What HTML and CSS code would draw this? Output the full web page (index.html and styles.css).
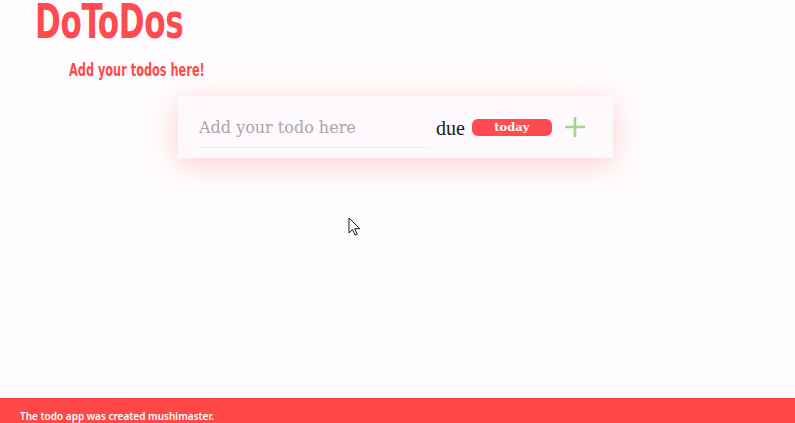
FILE: index.html
```html
<!DOCTYPE html>
<html>
<head>
<meta charset="utf-8">
<link rel="stylesheet" href="styles.css">
</head>
<body>
<div class="page">
  <header class="head">
    <h1 class="title">DoToDos</h1>
    <h2 class="subtitle">Add your todos here!</h2>
  </header>
  <main class="main">
    <form class="card">
      <input class="todo-input" type="text" placeholder="Add your todo here">
      <span class="due">due</span>
      <span class="pill">today</span>
      <svg class="plus" width="22" height="22" viewBox="0 0 22 22"><path d="M11 1v20M1 11h20" stroke="#a6d68b" stroke-width="2.6" fill="none"/></svg>
    </form>
  </main>
  <footer class="foot">The todo app was created mushimaster.</footer>
  <svg class="cursor" width="14" height="20" viewBox="0 0 14 20"><path d="M1 1v15l3.5-3.5 2.5 5.5 2.2-1-2.5-5.3h5z" fill="#fff" stroke="#1a1030" stroke-width="1"/></svg>
</div>
</body>
</html>
```
FILE: styles.css
```css
html, body { margin: 0; padding: 0; }
body { background: #fffcfd; width: 795px; height: 423px; overflow: hidden; }
.page { position: relative; height: 423px; display: flex; flex-direction: column; }
.head { padding-left: 35px; }
.title {
  margin: 0;
  font-family: "DejaVu Sans Condensed", "DejaVu Sans", sans-serif;
  font-weight: bold; font-size: 48px; line-height: 42px; color: #ff4a4f;
  letter-spacing: -0.5px; transform: scaleX(0.72); transform-origin: left;
  white-space: nowrap;
}
.subtitle {
  margin: 18px 0 0 34px;
  font-family: "DejaVu Sans Condensed", "DejaVu Sans", sans-serif;
  font-weight: bold; font-size: 18px; line-height: 20px; color: #ff4a4f;
  transform: scaleX(0.70); transform-origin: left; white-space: nowrap;
}
.main { flex: 1; display: flex; justify-content: flex-start; padding-left: 178px; padding-top: 16px; }
.card {
  margin: 0; width: 435px; height: 62px; box-sizing: border-box;
  background: #fdf9fc; display: flex; align-items: center;
  padding: 0 24px 0 19px;
  box-shadow: 0 6px 28px rgba(255, 90, 90, 0.28);
}
.todo-input {
  width: 233px; height: 34px; box-sizing: border-box;
  border: none; border-bottom: 1px solid #f1ecf1; background: transparent;
  font-family: "DejaVu Serif", "Liberation Serif", serif; font-size: 16px;
  padding: 2px 2px 8px; margin-top: 7px; outline: none; color: #333;
}
.todo-input::placeholder { color: #a9a5a8; }
.due {
  margin-left: 6px; font-family: "Liberation Serif", serif; font-size: 20px; color: #1a1a24;
  margin-top: 3px;
}
.pill {
  margin-left: 7px; width: 80px; height: 17px; border-radius: 6px; background: #ff4a4f;
  color: #fff; font-family: "DejaVu Serif", serif; font-weight: bold; font-size: 11.5px;
  display: flex; align-items: center; justify-content: center; line-height: 17px;
}
.plus { margin-left: 12px; }
.foot {
  height: 25px; background: #ff4747; color: #fff; box-sizing: border-box;
  font-family: "Noto Sans", "Open Sans", sans-serif; font-weight: 600; font-size: 10px;
  padding: 12px 0 0 20px; line-height: 13px;
}
.cursor { position: absolute; left: 348px; top: 217px; }
```
